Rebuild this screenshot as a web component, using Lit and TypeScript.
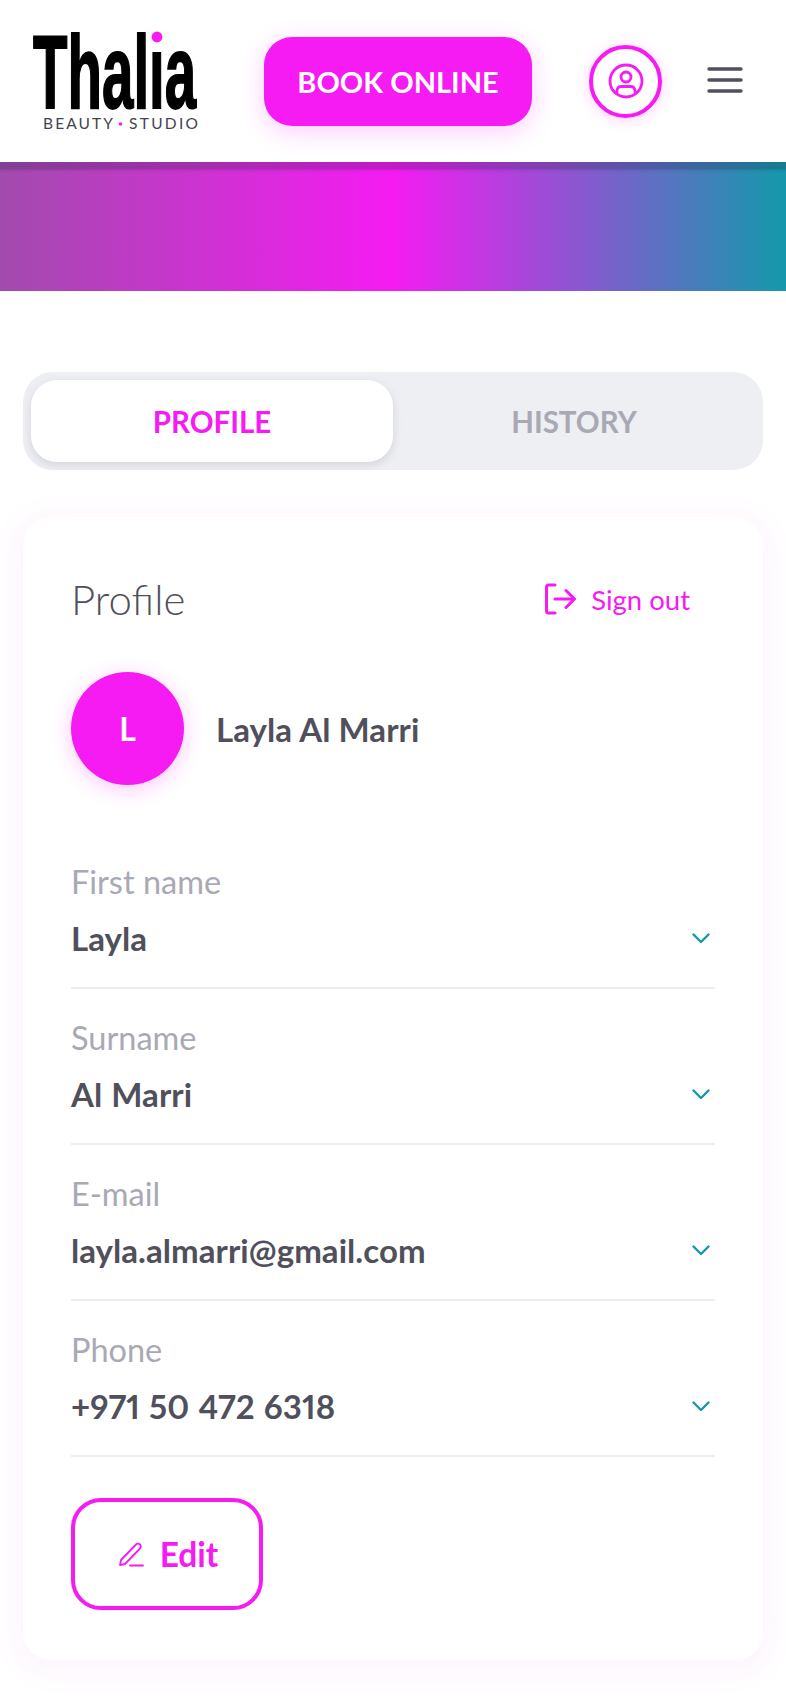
import { LitElement, html, css } from "lit";
import { customElement } from "lit/decorators.js";

const fields = [
  ["First name", "Layla"],
  ["Surname", "Al Marri"],
  ["E-mail", "layla.almarri@gmail.com"],
  ["Phone", "+971 50 472 6318"],
];

@customElement("app-root")
export class AppRoot extends LitElement {
  static styles = css`
    :host { display: block; width: 786px; height: 1704px; overflow: hidden; background: #fff; font-family: Lato, "Noto Sans", sans-serif; color: #50505c; }
    * { box-sizing: border-box; }
    .header { height: 162px; display: flex; align-items: center; background: #fff; position: relative; }
    .logo { width: 170px; height: 138px; margin-left: 30px; flex: none; display: block; }
    .book { margin-left: 64px; width: 268px; height: 89px; border-radius: 28px; background: #f51bf2; color: #fff; font-weight: 700; font-size: 29px; display: flex; align-items: center; justify-content: center; box-shadow: 0 6px 24px rgba(247,30,245,.22); flex: none; }
    .user { margin-left: 57px; width: 73px; height: 73px; border-radius: 50%; border: 4px solid #f51bf2; display: flex; align-items: center; justify-content: center; box-shadow: 0 2px 14px rgba(247,30,245,.2); flex: none; }
    .burger { margin-left: 45px; width: 36px; height: 30px; display: block; flex: none; }
    .banner { height: 129px; background: linear-gradient(90deg, #a24bae 0%, #f51bf2 50%, #1797ac 99%); position: relative; }
    .banner::after { content: ""; position: absolute; inset: 0 0 auto 0; height: 11px; background: linear-gradient(180deg, rgba(30,30,60,.24) 0 60%, rgba(30,30,60,.05) 80%, transparent); }
    .tabs { margin: 81px 23px 0; height: 98px; background: #eeeff3; border-radius: 30px; padding: 8px; display: flex; }
    .tab { flex: 1; display: flex; align-items: center; justify-content: center; font-size: 29.500px; font-weight: 700; color: #a9a9b5; border-radius: 26px; }
    .tab.on { background: #fff; color: #f51bf2; flex: none; width: 362px; box-shadow: 0 3px 10px rgba(60,60,90,.14); }
    .card { margin: 47px 23px 0; height: 1143px; border-radius: 28px; background: #fff; box-shadow: 0 6px 26px 12px #fdf7fe; padding: 0 48px; position: relative; }
    .top { display: flex; align-items: center; justify-content: space-between; padding-top: 54px; height: 110px; padding-right: 25px; }
    .title { font-size: 42px; font-weight: 300; line-height: 40px; }
    .out { display: flex; align-items: center; gap: 15px; color: #f51bf2; font-size: 27.500px; }
    .who { display: flex; align-items: center; gap: 32px; margin-top: 45px; }
    .av { width: 113px; height: 113px; border-radius: 50%; background: #f51bf2; color: #fff; display: flex; align-items: center; justify-content: center; font-size: 32px; font-weight: 700; box-shadow: 0 4px 20px rgba(247,30,245,.25); }
    .name { font-size: 33px; font-weight: 700; letter-spacing: .08px; }
    .fields { margin-top: 54px; }
    .row { height: 156px; border-bottom: 2px solid #ecedf1; display: flex; align-items: flex-end; justify-content: space-between; padding: 0 5px 29px 0; }
    .row:first-child { height: 150px; }
    .label { font-size: 32.500px; color: #a9a9b5; line-height: 40px; }
    .value { font-size: 33px; font-weight: 700; line-height: 40px; margin-top: 16px; font-variant-numeric: proportional-nums; letter-spacing: .06px; word-spacing: 1px; }
    .chev { margin-bottom: 14px; }
    .edit { margin-top: 41px; width: 192px; height: 112px; border: 4px solid #f51bf2; border-radius: 30px; display: flex; align-items: center; justify-content: center; gap: 16px; padding-left: 2px; color: #f51bf2; font-size: 33.500px; font-weight: 700; }
    svg { display: block; }
  `;

  render() {
    return html`
      <div class="header">
        <svg class="logo" viewBox="0 -4 170 138">
          <text transform="translate(3 92) scale(.543 1)" font-family="Liberation Sans" font-weight="700" font-size="104" fill="#000" stroke="#000" stroke-width="1.500" vector-effect="non-scaling-stroke">Thalia</text>
          <rect x="119" y="12" width="16" height="20" fill="#fff" />
          <circle cx="127" cy="21" r="5.400" fill="#f51bf2" />
          <text x="13" y="113" font-family="Lato" font-size="15.500" textLength="70" fill="#444450">BEAUTY</text>
          <circle cx="90.500" cy="108" r="1.800" fill="#f51bf2" />
          <text x="99" y="113" font-family="Lato" font-size="15.500" textLength="69" fill="#444450">STUDIO</text>
        </svg>
        <div class="book">BOOK ONLINE</div>
        <div class="user">
          <svg width="38" height="38" viewBox="0 0 38 38" fill="none" stroke="#f51bf2" stroke-width="2.800">
            <circle cx="19" cy="19" r="16" />
            <circle cx="19" cy="15" r="5" />
            <path d="M10 31c-.5-4 1-6.500 4-6.500h10c3 0 4.500 2.500 4 6.500" />
          </svg>
        </div>
        <svg class="burger" viewBox="0 0 36 30" fill="none" stroke="#50505c" stroke-width="3.400" stroke-linecap="round">
          <path d="M2 3h32M2 14h32M2 25h32" />
        </svg>
      </div>
      <div class="banner"></div>
      <div class="tabs">
        <div class="tab on">PROFILE</div>
        <div class="tab">HISTORY</div>
      </div>
      <div class="card">
        <div class="top">
          <div class="title">Profile</div>
          <div class="out">
            <svg width="32" height="32" viewBox="0 0 32 32" fill="none" stroke="#f51bf2" stroke-width="3" stroke-linecap="round" stroke-linejoin="round">
              <path d="M11 2H4.500C3 2 2.500 3 2.500 4v24c0 1 .5 2 2 2H11M11 16h19.500M22 7.500l8.500 8.500-8.500 8.500" />
            </svg>
            Sign out
          </div>
        </div>
        <div class="who">
          <div class="av">L</div>
          <div class="name">Layla Al Marri</div>
        </div>
        <div class="fields">
          ${fields.map(
            ([l, v]) => html`
              <div class="row">
                <div>
                  <div class="label">${l}</div>
                  <div class="value">${v}</div>
                </div>
                <svg class="chev" width="18" height="11" viewBox="0 0 18 11" fill="none" stroke="#1797ac" stroke-width="2.400" stroke-linecap="round" stroke-linejoin="round">
                  <path d="M1.500 1.500L9 9l7.500-7.500" />
                </svg>
              </div>
            `
          )}
        </div>
        <div class="edit">
          <svg width="26" height="26" viewBox="0 0 26 26" fill="none" stroke="#f51bf2" stroke-width="1.800" stroke-linejoin="round" stroke-linecap="round">
            <path d="M2 24l1-5L18 3.500c1-1 3-1 4 0s1 3 0 4L7 23zM12 24.500h13" />
          </svg>
          <span>Edit</span>
        </div>
      </div>
    `;
  }
}
